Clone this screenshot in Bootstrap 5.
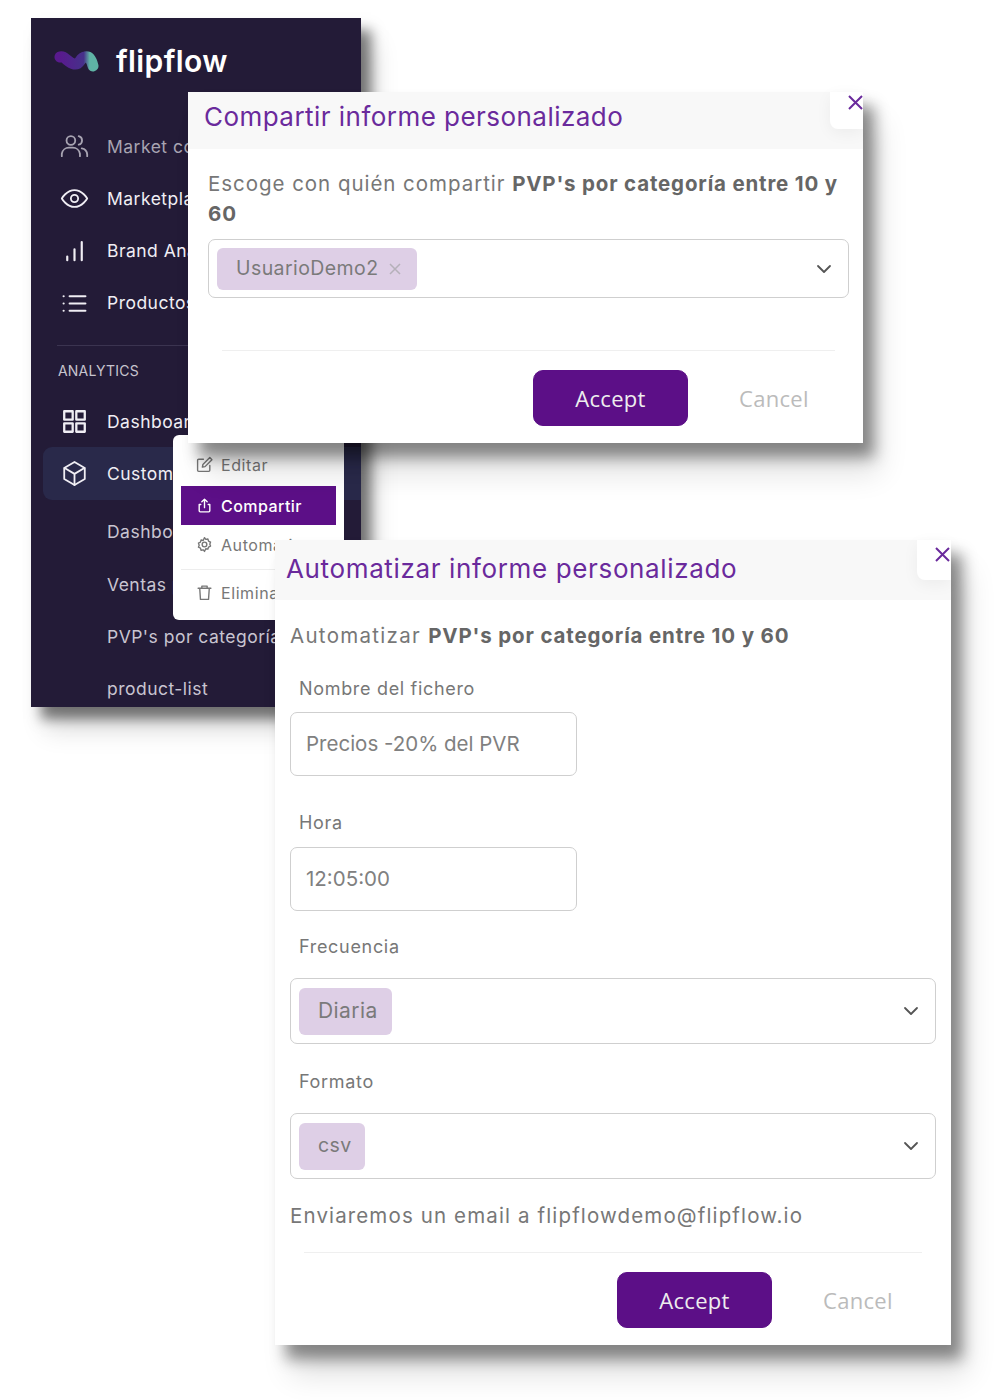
<!doctype html>
<html lang="es"><head><meta charset="utf-8"><title>flipflow</title>
<link href="https://cdn.jsdelivr.net/npm/bootstrap@5.3.0/dist/css/bootstrap.min.css" rel="stylesheet">
<style>
body{background:#fff;font-family:"Inter","Liberation Sans",sans-serif;width:1000px;height:1400px;position:relative;overflow:hidden;color:#6f6f6f;margin:0}
.win{position:absolute;}
.side{left:31px;top:18px;width:330px;height:689px;background:#231b37;box-shadow:10px 12px 12px rgba(0,0,0,.5),14px 24px 24px rgba(0,0,0,.12);overflow:hidden;padding:0 0 0 12px;color:#f0eef4}
.brand{height:86px;padding:0 0 0 11px;gap:17px;font-size:30px;font-weight:600;color:#fff;letter-spacing:.4px}
.sitem{height:52.3px;gap:18px;font-size:17.5px;padding-left:17px;letter-spacing:.48px;white-space:nowrap}
.sitem span,.sub{padding-top:1px}
.sitem svg{width:29px;height:29px;flex:none;fill:none;stroke:currentColor;stroke-width:1.5;stroke-linecap:round;stroke-linejoin:round}
.sub{padding-left:64px;color:#c9c5d1}
.subfirst{margin-top:6px}
.dim{color:#a8a4b2}
.sect{font-size:14px;letter-spacing:.2px;color:#c7c4ce;margin:0 0 5px 15px;height:39px}
.rule{border-top:1px solid #3b3450;margin:16px 0 0 14px;height:6px}
.act{background:#29294a;border-radius:9px 0 0 9px}
.menu{left:173px;top:435px;width:171px;height:185px;background:#fff;border-radius:6px;padding:10px 8px}
.mitem{height:39px;gap:8px;font-size:16px;padding-left:15px;color:#777;letter-spacing:.58px;white-space:nowrap;overflow:hidden}
.mitem svg{width:17px;height:17px;flex:none;fill:none;stroke:currentColor;stroke-width:1.3;stroke-linecap:round;stroke-linejoin:round}
.mon{background:#5c0f87;color:#fff;font-weight:500;margin-top:1px;letter-spacing:.45px}
.msep{border-top:1px solid #ededed;margin:5px 0 3px}
.dlg{background:#fff;box-shadow:11px 14px 14px rgba(0,0,0,.42),16px 30px 28px rgba(0,0,0,.12)}
.d1{left:188px;top:92px;width:675px;height:351px}
.d2{left:275px;top:540px;width:676px;height:805px}
.dh{background:#f8f8f8;color:#6a2a9c;font-size:26px;white-space:nowrap}
.d1 .dh{height:57px;padding:0 0 8px 16px;letter-spacing:.46px}
.d2 .dh{height:60px;padding:0 0 4px 11px;letter-spacing:.64px}
.xtab{position:absolute;top:0;right:0;background:#fff;border-bottom-left-radius:8px;width:33px;height:37px;box-shadow:0 4px 16px rgba(0,0,0,.05)}
.d2 .xtab{width:34px;height:40px}
.xtab svg{position:absolute;right:0;top:3px;width:15px;height:15px;stroke:#6a2a9c;stroke-width:2;fill:none}
.d2 .xtab svg{top:7px;right:1px}
.lead-t{font-size:20.5px;line-height:30px;letter-spacing:.96px;color:#777}
.lead-t b{font-weight:700;color:#666;letter-spacing:.83px}
.lead-a{letter-spacing:1.3px}
.lead-a b{letter-spacing:.86px}
.lead-e{letter-spacing:1.13px}
.box{border:1px solid #cfcfcf;border-radius:7px;background:#fff}
.chip{background:#decfe6;border-radius:6px;color:#7a7a7a;font-size:19.5px;letter-spacing:.42px}
.chev{width:16px;height:16px;stroke:#555;stroke-width:1.8;fill:none;stroke-linecap:round;stroke-linejoin:round;flex:none}
.hr2{border-top:1px solid #efefef}
.bacc{background:#5c0f87;border:1px solid #5c0f87;color:#eee;border-radius:10px;font-family:"Open Sans","Noto Sans",sans-serif;font-size:22px;letter-spacing:.3px;height:56px;width:155px;display:flex;align-items:center;justify-content:center;padding:0}
.bacc:hover{background:#5c0f87;color:#fff;border-color:#5c0f87}
.bcan{color:#bbb;font-family:"Open Sans","Noto Sans",sans-serif;font-size:22px;letter-spacing:.3px;border:0;background:none;padding:0}
.lab{font-size:18px;letter-spacing:.68px;color:#777;padding-left:9px;line-height:24px}
.inp{width:287px;height:64px;padding:0 15px;font-size:20.5px;color:#808080}
.d2 .body{padding-left:15px;position:relative}
.sel{width:646px;height:66px;padding:0 16px 0 8px}
</style></head><body>

<aside class="win side">
 <div class="d-flex align-items-center brand">
  <svg width="45" height="24" viewBox="0 0 45 24"><defs><linearGradient id="lg" x1="0" x2="1"><stop offset="0" stop-color="#591a8e"/><stop offset=".72" stop-color="#46318a"/><stop offset=".9" stop-color="#5fb3a5"/></linearGradient></defs><path d="M6 8C10 6 14 14 20 15 27 16 25 9 31 8 36 7 38 13 39 17" fill="none" stroke="url(#lg)" stroke-width="11" stroke-linecap="round"/></svg>
  <span>flipflow</span>
 </div>
 <div class="d-flex align-items-center sitem dim mt-3"><svg viewBox="0 0 24 24"><circle cx="9" cy="7" r="3.6"/><path d="M1.5 20v-2a6 6 0 0 1 6-5h3a6 6 0 0 1 6 5v2M15.5 3.5a3.6 3.6 0 0 1 0 7M18 13.5a5.5 5.5 0 0 1 4.5 5v1.5"/></svg><span>Market competition</span></div>
 <div class="d-flex align-items-center sitem"><svg viewBox="0 0 24 24"><path d="M1.500 12S5.500 5 12 5s10.500 7 10.500 7-4 7-10.500 7S1.500 12 1.500 12z"/><circle cx="12" cy="12" r="3"/></svg><span>Marketplaces</span></div>
 <div class="d-flex align-items-center sitem"><svg viewBox="0 0 24 24"><path d="M6 20v-3M12 20v-9M18 20V5" stroke-width="1.8"/></svg><span>Brand Analytics</span></div>
 <div class="d-flex align-items-center sitem"><svg viewBox="0 0 24 24"><path d="M8 6h13M8 12h13M8 18h13M3 6h.01M3 12h.01M3 18h.01" stroke-width="1.8"/></svg><span>Productos</span></div>
 <div class="rule"></div>
 <div class="d-flex align-items-center sect">ANALYTICS</div>
 <div class="d-flex align-items-center sitem"><svg viewBox="0 0 24 24" style="stroke-width:1.900"><rect x="3.500" y="3.500" width="7" height="7"/><rect x="13.500" y="3.500" width="7" height="7"/><rect x="3.500" y="13.500" width="7" height="7"/><rect x="13.500" y="13.500" width="7" height="7"/></svg><span>Dashboards</span></div>
 <div class="d-flex align-items-center sitem act"><svg viewBox="0 0 24 24"><path d="M20.500 16.500v-9L12 2.500l-8.500 5v9l8.500 5 8.500-5z"/><path d="M3.800 7.500 12 12.300l8.200-4.800M12 21.500v-9.200"/></svg><span>Custom reports</span></div>
 <div class="d-flex align-items-center sitem sub subfirst">Dashboards</div>
 <div class="d-flex align-items-center sitem sub">Ventas por canal</div>
 <div class="d-flex align-items-center sitem sub">PVP's por categoría entre 10 y 60</div>
 <div class="d-flex align-items-center sitem sub">product-list</div>
</aside>

<div class="win menu">
 <div class="d-flex align-items-center mitem"><svg viewBox="0 0 16 16"><path d="M13 9v4.500a1 1 0 0 1-1 1H2.500a1 1 0 0 1-1-1V4a1 1 0 0 1 1-1H7"/><path d="M6 10.500l.5-2.500 6.500-6.500 2 2L8.500 10z"/></svg><span>Editar</span></div>
 <div class="d-flex align-items-center mitem mon" style="margin-top:2px"><svg viewBox="0 0 16 16"><path d="M8 10V2M5.500 4.500 8 2l2.500 2.500M4.500 7H3v6a1 1 0 0 0 1 1h8a1 1 0 0 0 1-1V7h-1.500"/></svg><span>Compartir</span></div>
 <div class="d-flex align-items-center mitem"><svg viewBox="0 0 16 16"><circle cx="8" cy="8" r="2.200"/><path d="M8 1.500l1.200 1.700 2-.4.600 2 1.900.9-.7 2 .7 1.800-1.900.9-.6 2-2-.4L8 14.500l-1.200-1.500-2 .4-.6-2-1.900-.9.7-1.800-.7-2 1.900-.9.6-2 2 .4z"/></svg><span>Automatizar</span></div>
 <div class="msep"></div>
 <div class="d-flex align-items-center mitem"><svg viewBox="0 0 16 16"><path d="M2 4h12M5.500 4V2h5v2M3.500 4l.7 10.500h7.600L12.500 4"/></svg><span>Eliminar</span></div>
</div>

<section class="win dlg d1">
 <div class="d-flex align-items-center dh">Compartir informe personalizado</div>
 <div class="xtab"><svg viewBox="0 0 15 15"><path d="M1 1l13 13M14 1 1 14"/></svg></div>
 <div class="lead-t" style="padding:20px 20px 0">Escoge con quién compartir <b>PVP's por categoría entre 10 y 60</b></div>
 <div class="box d-flex align-items-center justify-content-between" style="margin:10px 14px 0 20px;height:59px;padding:0 16px 0 8px">
  <div class="chip d-flex align-items-center" style="height:42px;padding:0 16px 0 19px;gap:10px"><span>UsuarioDemo2</span><svg width="12" height="12" viewBox="0 0 12 12" stroke="#b5b0b9" stroke-width="1.500" fill="none"><path d="M1 1l10 10M11 1 1 11"/></svg></div>
  <svg class="chev" viewBox="0 0 16 16"><path d="M2 5l6 6 6-6"/></svg>
 </div>
 <div class="hr2" style="margin:52px 28px 0 34px"></div>
 <div class="d-flex align-items-center" style="margin-top:19px;padding-left:345px;gap:51px"><button class="btn bacc" type="button">Accept</button><button class="btn bcan" type="button">Cancel</button></div>
</section>

<section class="win dlg d2">
 <div class="d-flex align-items-center dh">Automatizar informe personalizado</div>
 <div class="xtab"><svg viewBox="0 0 15 15"><path d="M1 1l13 13M14 1 1 14"/></svg></div>
 <div class="body">
  <div class="lead-t lead-a" style="padding-top:21px">Automatizar <b>PVP's por categoría entre 10 y 60</b></div>
  <div class="lab" style="margin-top:26px">Nombre del fichero</div>
  <div class="box inp d-flex align-items-center" style="margin-top:11px">Precios -20% del PVR</div>
  <div class="lab" style="margin-top:35px">Hora</div>
  <div class="box inp d-flex align-items-center" style="margin-top:12px">12:05:00</div>
  <div class="lab" style="margin-top:24px">Frecuencia</div>
  <div class="box sel d-flex align-items-center justify-content-between" style="margin-top:19px">
   <div class="chip d-flex align-items-center" style="height:47px;padding:0 14px 0 19px;font-size:21px">Diaria</div>
   <svg class="chev" viewBox="0 0 16 16"><path d="M2 5l6 6 6-6"/></svg>
  </div>
  <div class="lab" style="margin-top:26px">Formato</div>
  <div class="box sel d-flex align-items-center justify-content-between" style="margin-top:19px">
   <div class="chip d-flex align-items-center" style="height:47px;padding:0 13px 0 19px">csv</div>
   <svg class="chev" viewBox="0 0 16 16"><path d="M2 5l6 6 6-6"/></svg>
  </div>
  <div class="lead-t lead-e" style="margin-top:22px">Enviaremos un email a flipflowdemo@flipflow.io</div>
  <div class="hr2" style="margin:21px 29px 0 14px"></div>
  <div class="d-flex align-items-center" style="margin-top:19px;padding-left:327px;gap:51px"><button class="btn bacc" type="button">Accept</button><button class="btn bcan" type="button">Cancel</button></div>
 </div>
</section>
</body></html>
